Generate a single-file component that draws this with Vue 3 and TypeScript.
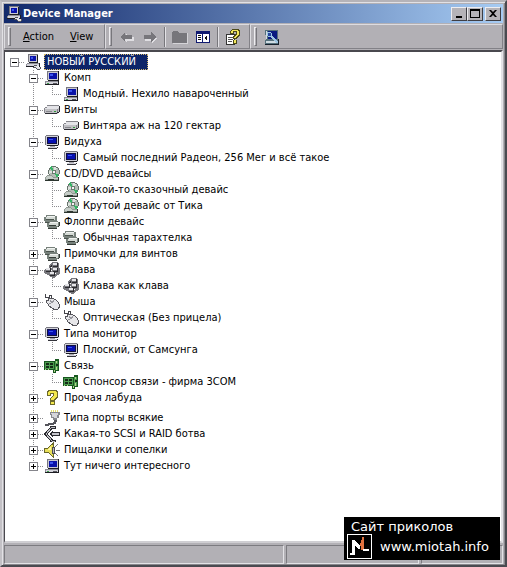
<script setup lang="ts">
import { reactive } from 'vue'

interface Group {
  label: string
  icon: string
  open: boolean
  spaced?: boolean
  children: string[]
}

const rootLabel = 'НОВЫЙ РУССКИЙ'

const groups = reactive<Group[]>([
  { label: 'Комп', icon: 'computer', open: true, children: ['Модный. Нехило навароченный'] },
  { label: 'Винты', icon: 'disk', open: true, children: ['Винтяра аж на 120 гектар'] },
  { label: 'Видуха', icon: 'monitor', open: true, children: ['Самый последний Радеон, 256 Мег и всё такое'] },
  { label: 'CD/DVD девайсы', icon: 'cd', open: true, children: ['Какой-то сказочный девайс', 'Крутой девайс от Тика'] },
  { label: 'Флоппи девайс', icon: 'drives', open: true, children: ['Обычная тарахтелка'] },
  { label: 'Примочки для винтов', icon: 'drives', open: false, children: [] },
  { label: 'Клава', icon: 'keyboard', open: true, children: ['Клава как клава'] },
  { label: 'Мыша', icon: 'mouse', open: true, children: ['Оптическая (Без прицела)'] },
  { label: 'Типа монитор', icon: 'monitor', open: true, children: ['Плоский, от Самсунга'] },
  { label: 'Связь', icon: 'network', open: true, children: ['Спонсор связи - фирма 3COM'] },
  { label: 'Прочая лабуда', icon: 'unknown', open: false, children: [] },
  { label: 'Типа порты всякие', icon: 'port', open: false, spaced: true, children: [] },
  { label: 'Какая-то SCSI и RAID ботва', icon: 'scsi', open: false, children: [] },
  { label: 'Пищалки и сопелки', icon: 'sound', open: false, children: [] },
  { label: 'Тут ничего интересного', icon: 'computer', open: false, children: [] },
])
</script>

<template>
  <svg class="defs" aria-hidden="true">
    <symbol id="computer" viewBox="0 0 16 16">
      <path fill="#c9c9d2" d="M3 1h11v9H3z" />
      <path fill="#77777f" d="M3 1h1v9H3zM3 1h11v1H3z" />
      <path fill="#1c1c22" d="M14 1h1v10h-1zM4 10h10v1H4z" />
      <path fill="#0912a8" d="M5 3h8v6H5z" />
      <path fill="#3c55ee" d="M6 4h3v2H6z" />
      <path fill="#d3d3da" d="M2 11h12v3H2z" />
      <path fill="#8d8d96" d="M1 11h1v3H1zM2 11h12v1H2z" />
      <path fill="#1c1c22" d="M1 14h14v1H1zM14 11h1v4h-1z" />
      <path fill="#55555c" d="M9 13h4v1H9z" />
      <path fill="#3b9b4a" d="M3 13h2v1H3z" />
    </symbol>
    <symbol id="root" viewBox="0 0 16 16">
      <path fill="#c9c9d2" d="M3 0h9v8H3z" />
      <path fill="#77777f" d="M3 0h10v1H3zM3 0h1v8H3z" />
      <path fill="#1c1c22" d="M12 1h1v8h-1zM4 8h8v1H4z" />
      <path fill="#0912a8" d="M5 2h6v5H5z" />
      <path fill="#3c55ee" d="M6 3h2v2H6z" />
      <path fill="#d3d3da" d="M2 9h12v3H2z" />
      <path fill="#8d8d96" d="M2 9h12v1H2zM1 10h1v3H1z" />
      <path fill="#1c1c22" d="M1 12h10v1H1zM14 9h1v4h-1z" />
      <path fill="#e4e4e8" d="M9 11h4v2h2v3h-3v-2H9z" />
      <path fill="#55555c" d="M9 11h3v1H9zM8 13h3v1H8zM11 14h1v1h-1zM12 15h3v1h-3zM15 13h1v2h-1z" />
    </symbol>
    <symbol id="monitor" viewBox="0 0 16 16">
      <path fill="#d0d0d8" d="M2 1h13v11H2z" />
      <path fill="#77777f" d="M1 2h1v9H1zM2 1h12v1H2z" />
      <path fill="#1c1c22" d="M14 2h1v9h-1zM3 11h11v1H3z" />
      <path fill="#101040" d="M3 3h10v7H3z" />
      <path fill="#0710b2" d="M4 4h8v5H4z" />
      <path fill="#3c55ee" d="M5 5h4v1H5z" />
      <path fill="#a7a7b0" d="M6 12h5v1H6z" />
      <path fill="#d0d0d8" d="M4 13h9v1H4z" />
      <path fill="#33333a" d="M4 14h9v1H4zM13 13h1v1h-1z" />
    </symbol>
    <symbol id="disk" viewBox="0 0 16 16">
      <path fill="#c0c0c4" d="M3 4h12v6l-2 2H1V6z" />
      <path fill="#e4e4e8" d="M3 4h12v1l-2 2H1V6z" />
      <path fill="#85858b" d="M3 3h12v1H3zM1 5h2v1H1zM0 6h1v5H0zM13 7h1v3h-1z" />
      <path fill="#2a2a30" d="M1 11h12v1H1zM13 10h2v1h-2zM15 4h1v6h-1z" />
      <path fill="#88888e" d="M2 9h6v1H2z" />
      <path fill="#2f9b3a" d="M10 9h2v1h-2z" />
    </symbol>
    <symbol id="drives" viewBox="0 0 16 16">
      <path fill="#77817b" d="M2 1h9v1h2v5h-2v1H1V7H0V3h2z" />
      <path fill="#d4dad5" d="M2 3h9v3H2z" />
      <path fill="#f0f2f0" d="M3 2h8v1H3z" />
      <path fill="#4b544e" d="M2 5h8v1H2zM1 8h10v1H1z" />
      <path fill="#77817b" d="M5 7h9v1h1v5h-2v1H4v-1H3V9h2z" />
      <path fill="#d4dad5" d="M5 9h9v3H5z" />
      <path fill="#f0f2f0" d="M6 8h8v1H6z" />
      <path fill="#343b36" d="M5 11h7v1H5zM4 14h9v1H4zM14 12h1v1h-1zM15 8h1v4h-1z" />
    </symbol>
    <symbol id="cd" viewBox="0 0 16 16">
      <circle cx="10" cy="6" r="5.5" fill="#b3bbb5" stroke="#66716a" />
      <path fill="#35b464" d="M10 6 5 2 8 0zM10 6l5 3-2 3z" />
      <path fill="#dce4de" d="M10 6 10 1 13 2zM10 6 5 8 5 5z" />
      <circle cx="10" cy="6" r="1.500" fill="#f5f5f5" stroke="#6d776f" />
      <path fill="#929a94" d="M3 9h5l1 2h6v4H1v-4z" />
      <path fill="#c6cdc8" d="M3 10h4l2 2h5v1H2v-2z" />
      <path fill="#2c352f" d="M1 14h14v1H1zM14 11h1v4h-1zM4 13h6v1H4z" />
    </symbol>
    <symbol id="keyboard" viewBox="0 0 16 16">
      <path fill="#77777c" d="M9 0h5l1 2v3l1 2v4l-2 2-2 1-2 2-4-1-1-2-4-1-1-3 2-3h3V3l2-2z" />
      <path fill="#e6e6e9" d="M9 1h4v2H9zM2 6h4v2H2zM9 6h4v2H9zM6 10h4v2H6z" />
      <path fill="#2c2c30" d="M13 1h1v4h-5V4h4zM6 6h1v4H2V9h4zM13 6h1v4H9V9h4zM10 10h1v4H6v-1h4zM7 3h1v2H6V4h1z" />
      <path fill="#fff" d="M7 5h1v1H7zM7 8h1v1H7zM11 11h1v1h-1z" />
    </symbol>
    <symbol id="mouse" viewBox="0 0 16 16">
      <path fill="none" stroke="#44444a" d="M1 0v3h4V1h2v3" />
      <path fill="#55555b" d="M4 4h6v1h2v1h1v1h1v1h1v2h1v4h-1v1h-1v1H9v-1H8v-1H6v-1H5v-1H4v-2H3V9H2V6h2z" />
      <path fill="#e6e6e9" d="M5 5h5v1h2v1h1v1h1v2h1v3h-1v2h-4v-1H8v-1H7v-1H5v-2H4V9H3V7h2z" />
      <path fill="#96969c" d="M9 6h1v2H9v1H7v1H5V9h2V8h1V7h1zM6 6h1v1h1v1H6z" />
    </symbol>
    <symbol id="network" viewBox="0 0 16 16">
      <path fill="#17571f" d="M0 3h11V1h4v12h-3v2H9v-3H0z" />
      <path fill="#4c9b4f" d="M1 4h9v7H1zM11 3h3v9h-3z" />
      <path fill="#152b18" d="M2 5h3v2H2zM6 5h3v2H6zM2 8h3v2H2zM6 8h3v2H6zM12 6h2v2h-2z" />
      <path fill="#b5d98b" d="M12 3h1v2h-1zM12 9h1v3h-1zM10 12h1v2h-1zM1 11h1v1H1zM4 11h1v1H4z" />
    </symbol>
    <symbol id="unknown" viewBox="0 0 16 16">
      <path fill="#6c692c" d="M4 0h8l2 2v5l-3 3v1H6V8l3-2V4H7v2H3V2zM6 11h5v4H6z" />
      <path fill="#f3e84c" d="M5 1h6l2 2v4l-3 2v1H7V8l3-2V4L9 3H6v2H4V3zM7 12h3v2H7z" />
    </symbol>
    <symbol id="port" viewBox="0 0 16 16">
      <path fill="#e7df6c" d="M7 0h1v2H7zM9 0h1v2H9zM11 0h1v2h-1zM13 0h1v2h-1z" />
      <path fill="#88888e" d="M6 2h10v3h-1v3h-2v2H9V8H7V5H6z" />
      <path fill="#d5d5da" d="M7 3h7v2h-1v3h-3V7H8V4H7z" />
      <path fill="#55555b" d="M10 10h3v2h-1v2h-2v1H5v1H1v-2h3v-1h5v-1h1z" />
    </symbol>
    <symbol id="scsi" viewBox="0 0 16 16">
      <path fill="none" stroke="#2b2b30" stroke-width="3" d="M12 1 8 1 2 8l6 7h4" />
      <path fill="none" stroke="#bcbcc2" d="M11 1H8L2 8l6 7h3" />
      <path fill="#2b2b30" d="M5 8l4-4v2h7v4H9v2z" />
      <path fill="#c6c6cc" d="M7 8l1-1h7v2H8z" />
    </symbol>
    <symbol id="sound" viewBox="0 0 16 16">
      <path fill="#e8df58" stroke="#68662b" d="M.5 6.500h3L9.500 1v14l-6-5h-3z" />
      <path fill="#fbf7a8" d="M4 7l3-3v4H4z" />
      <path fill="#b9b9bd" stroke="#4c4c50" d="M8 5h2v6H8z" />
      <path fill="none" stroke="#77777c" d="M11 5l3-3M12 8h4M11 11l3 3" />
    </symbol>
  </svg>

  <main class="window">
    <header class="titlebar">
      <svg class="icon"><use href="#root" /></svg>
      <h1>Device Manager</h1>
      <div class="controls">
        <button type="button" aria-label="Minimize">
          <svg viewBox="0 0 12 10"><path d="M3 7h6v2H3z" /></svg>
        </button>
        <button type="button" aria-label="Maximize">
          <svg viewBox="0 0 12 10"><path fill-rule="evenodd" d="M1 0h10v9H1zM2 2h8v6H2z" /></svg>
        </button>
        <button type="button" aria-label="Close" class="close">
          <svg viewBox="0 0 12 10"><path d="M2 1h2l2 2 2-2h2L7 4.500 10 8H8L6 6 4 8H2l3-3.500z" /></svg>
        </button>
      </div>
    </header>

    <div class="toolbar">
      <nav class="band menu">
        <i class="grip"></i>
        <button type="button"><u>A</u>ction</button>
        <button type="button"><u>V</u>iew</button>
      </nav>
      <div class="band tools">
        <i class="grip"></i>
        <button type="button" aria-label="Back">
          <svg class="icon"><path fill="#e0dfe3" d="M3 9l5-4v3h7v4H8v2z" /><path fill="#77767b" d="M1 8l5-5v3h7v4H6v3z" /></svg>
        </button>
        <button type="button" aria-label="Forward">
          <svg class="icon"><path fill="#e0dfe3" d="M15 9l-5-4v3H3v4h7v2z" /><path fill="#77767b" d="M14 8L9 3v3H2v4h7v3z" /></svg>
        </button>
        <i class="separator"></i>
        <button type="button" aria-label="Up one level">
          <svg class="icon"><path fill="#d5d4d8" d="M1 4h15v11H1z" /><path fill="#77767b" d="M1 2h5l1 2h8v10H0V3z" /></svg>
        </button>
        <button type="button" aria-label="Show/Hide console tree">
          <svg class="icon"><path fill="#101a70" d="M1 2h14v12H1z" /><path fill="#fff" d="M2 5h5v8H2zM8 5h6v8H8z" /><path fill="#111" d="M3 6h3v1H3zM3 8h3v1H3zM3 10h3v1H3zM9 9l3-3v6z" /></svg>
        </button>
        <i class="separator"></i>
        <button type="button" aria-label="Help">
          <svg class="icon"><path fill="#333" d="M1 5h9v11H1z" /><path fill="#fff" d="M2 6h7v9H2z" /><path fill="#555" d="M3 8h5v1H3zM3 10h5v1H3zM3 12h4v1H3z" /><path fill="#4c4a18" d="M7 0h6l2 2v5l-3 2v1H8V7l3-2V3H9v2H5V2zM8 11h4v4H8z" /><path fill="#f3e85c" d="M7 1h5l2 2v3l-3 2v1H9V8l3-3V3l-1-1H8v2H6V2zM9 11h2v3H9z" /></svg>
        </button>
      </div>
      <div class="band rest">
        <i class="grip"></i>
        <button type="button" aria-label="Scan for hardware changes">
          <svg class="icon">
            <path fill="#55707c" d="M1 1h13v10h1v5H1v-5h1z" />
            <path fill="#cfdbe2" d="M2 12h12v2H2zM2 2h1v8H2z" />
            <path fill="#0a1a80" d="M4 2h9v8H4z" />
            <path fill="#9cc4e2" d="M3 3h4v1h1v3h1v1h1v1h1v1h1v1h1v1h1v2h-2v-1h-1v-1h-1v-1H9v-1H8V9H7V8H4V7H3z" />
            <path fill="#26469c" d="M4 4h3v3H4z" />
            <path fill="#16202c" d="M1 15h14v1H1zM14 10h1v5h-1z" />
          </svg>
        </button>
      </div>
    </div>

    <section class="panel">
      <div class="row">
        <button type="button" class="toggle" aria-label="Collapse"><svg viewBox="0 0 7 7"><path d="M1 3h5v1H1z" /></svg></button>
        <i class="link"></i>
        <svg class="icon"><use href="#root" /></svg>
        <span class="selected">{{ rootLabel }}</span>
      </div>
      <ul class="groups">
        <li v-for="group in groups" :key="group.label" :class="{ spaced: group.spaced }">
          <div class="row">
            <button type="button" class="toggle" :aria-label="group.label" :aria-expanded="group.open" @click="group.open = !group.open">
              <svg viewBox="0 0 7 7"><path d="M1 3h5v1H1z" /><path v-if="!group.open" d="M3 1h1v5H3z" /></svg>
            </button>
            <i class="link"></i>
            <svg class="icon"><use :href="'#' + group.icon" /></svg>
            <span class="label">{{ group.label }}</span>
          </div>
          <ul v-if="group.open && group.children.length" class="devices">
            <li v-for="device in group.children" :key="device">
              <div class="row">
                <i class="elbow"></i>
                <svg class="icon"><use :href="'#' + group.icon" /></svg>
                <span class="label">{{ device }}</span>
              </div>
            </li>
          </ul>
        </li>
      </ul>
    </section>

    <footer class="status">
      <span></span>
      <span></span>
      <span></span>
    </footer>

    <aside class="stamp">
      <strong>Сайт приколов</strong>
      <div>
        <svg viewBox="0 0 25 25">
          <path fill="#000" stroke="#fff" d="M.5.5h24v24H.5z" />
          <path fill="#fff" d="M3 19h2V6h3l5 6v3h-2l-3-4v10H3z" />
          <path fill="#e0713f" d="M12 12h1V9h1V6h1V3h2v13h-3v-4h-2z" />
          <path fill="#fff" d="M16 15h6v2h-6z" />
        </svg>
        <a href="#">www.miotah.info</a>
      </div>
    </aside>
  </main>
</template>

<style>
body {
  background: #b2b0b5;
}
</style>

<style scoped>
.defs {
  position: absolute;
  width: 0;
  height: 0;
}

.window {
  position: relative;
  box-sizing: border-box;
  min-height: 100vh;
  display: flex;
  flex-direction: column;
  padding: 2px 2px 1px;
  border: 1px solid #c3c1c6;
  border-top: 2px solid #b5b3b8;
  border-left-width: 2px;
  border-right: 2px solid #4a4a50;
  border-bottom: 2px solid #4a4a50;
  box-shadow: inset 1px 1px #e2e1e5, inset -1px -1px #88878c;
  background: #b2b0b5;
  color: #000;
  font: 11px/16px "DejaVu Sans Condensed", "DejaVu Sans", sans-serif;
}

button {
  padding: 0;
  border: 0;
  background: none;
  color: inherit;
  font: inherit;
}

.icon {
  flex: none;
  display: block;
  width: 16px;
  height: 16px;
  shape-rendering: crispEdges;
}

.titlebar {
  display: flex;
  align-items: center;
  height: 19px;
  padding: 0 2px;
  background: linear-gradient(to right, #12296b, #a6cbf3);
}

h1 {
  flex: 1;
  margin: 0 0 0 1px;
  color: #fff;
  font-size: 11px;
  font-weight: bold;
}

.controls {
  display: flex;
}

.controls button {
  width: 16px;
  height: 14px;
  display: grid;
  place-items: center;
  border: 1px solid;
  border-color: #eeedf0 #3e3e44 #3e3e44 #eeedf0;
  background: #b5b3b8;
}

.controls .close {
  margin-left: 2px;
}

.controls svg {
  width: 12px;
  height: 10px;
}

.toolbar {
  display: flex;
  height: 25px;
  margin-top: 1px;
}

.band {
  box-sizing: border-box;
  display: flex;
  align-items: center;
  border: 1px solid;
  border-color: #dddce0 #828187 #828187 #dddce0;
}

.menu {
  width: 101px;
  gap: 16px;
}

.menu .grip {
  margin-right: -4px;
}

.tools {
  width: 145px;
  gap: 7px;
}

.rest {
  flex: 1;
  gap: 7px;
}

.grip {
  width: 1px;
  height: 17px;
  margin-left: 3px;
  border: 1px solid;
  border-color: #eeedf0 #77767b #77767b #eeedf0;
}

.separator {
  width: 1px;
  height: 20px;
  margin: 0 -1px;
  background: #77767b;
  border-right: 1px solid #e3e2e6;
}

.panel {
  flex: 1;
  margin-top: 1px;
  padding: 2px 4px 0 5px;
  border: 2px solid;
  border-color: #4a494f #e3e2e6 #cfced2 #4a494f;
  border-left-width: 1px;
  background: #fff;
}

ul {
  margin: 0;
  padding: 0;
  list-style: none;
}

.row {
  display: flex;
  align-items: center;
  height: 16px;
  white-space: nowrap;
}

.toggle {
  flex: none;
  width: 9px;
  height: 9px;
  border: 1px solid #85858b;
  background: #fff;
}

.toggle svg {
  display: block;
  width: 7px;
  height: 7px;
  shape-rendering: crispEdges;
}

.link,
.elbow {
  flex: none;
  height: 1px;
  background: repeating-linear-gradient(to right, #8c8c90 0 1px, transparent 1px 2px);
}

.link {
  width: 5px;
  margin-right: 1px;
}

.elbow {
  width: 10px;
  margin-right: 1px;
}

.label {
  margin-left: 4px;
  line-height: 16px;
}

.selected {
  box-sizing: border-box;
  height: 16px;
  margin-left: 3px;
  padding: 0 11px 0 2px;
  border: 1px dotted #d5b96b;
  background: #0d2468;
  color: #fff;
  line-height: 14px;
}

.groups {
  margin-left: 19px;
}

.groups > li,
.devices > li {
  background: repeating-linear-gradient(to bottom, #8c8c90 0 1px, transparent 1px 2px) no-repeat 4px 0 / 1px 100%;
}

.groups > .spaced {
  padding-top: 4px;
}

.groups > li:last-child {
  background-size: 1px 8px;
}

.devices {
  margin-left: 23px;
}

.devices > li {
  background-position: 0 0;
}

.devices > li:last-child {
  background-size: 1px 8px;
}

.status {
  display: grid;
  grid-template-columns: 280fr 133fr 82fr;
  gap: 2px;
  height: 19px;
  margin-top: 2px;
}

.status span {
  border: 1px solid;
  border-color: #7c7b80 #e3e2e6 #e3e2e6 #7c7b80;
}

.stamp {
  position: absolute;
  right: 5px;
  bottom: 5px;
  box-sizing: border-box;
  width: 156px;
  height: 43px;
  padding: 2px 3px;
  background: #000;
  color: #fff;
  font-family: "DejaVu Sans", sans-serif;
}

.stamp strong {
  display: block;
  padding-left: 4px;
  font-size: 13px;
  font-weight: normal;
  line-height: 15px;
}

.stamp div {
  display: flex;
  align-items: center;
  gap: 8px;
}

.stamp svg {
  flex: none;
  width: 25px;
  height: 25px;
  shape-rendering: crispEdges;
}

.stamp a {
  color: inherit;
  font-size: 13px;
  text-decoration: none;
}
</style>
